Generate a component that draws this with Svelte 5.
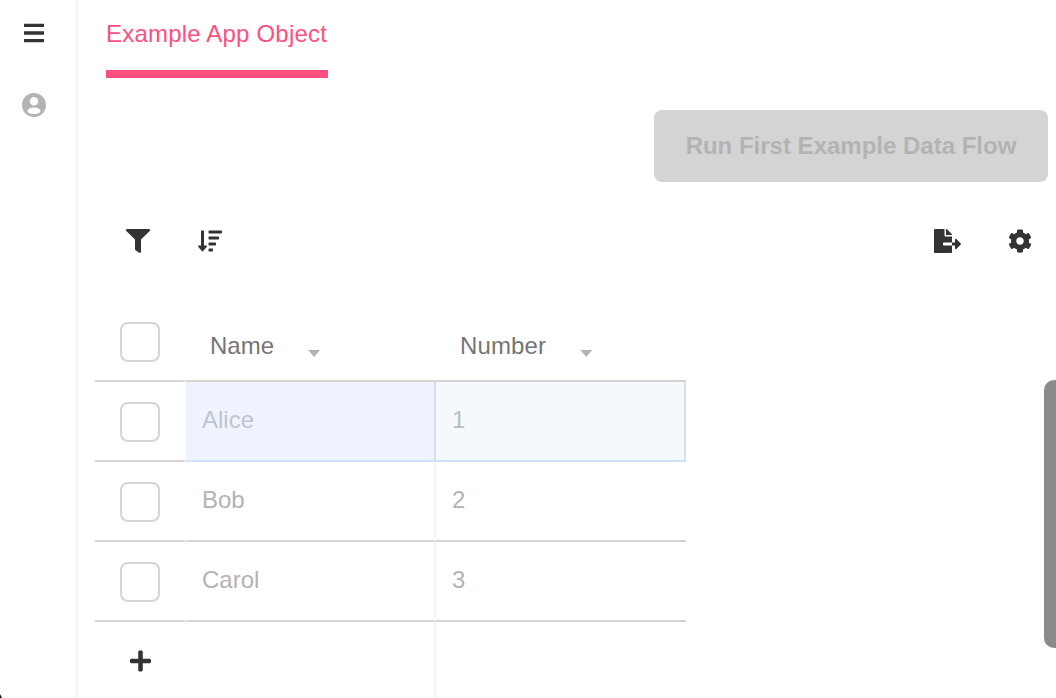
<script>
  const rows = [
    { name: 'Alice', number: 1, selected: true },
    { name: 'Bob', number: 2 },
    { name: 'Carol', number: 3 }
  ];
</script>

<div class="app">
  <nav class="sidebar">
    <svg class="menu" viewBox="0 0 20 20" width="20" height="20"><path d="M0 .7h20v3.400H0zM0 8.300h20v3.400H0zM0 15.900h20v3.400H0z" /></svg>
    <svg class="account" viewBox="2 2 20 20" width="24" height="24"><path d="M12 2C6.480 2 2 6.480 2 12s4.480 10 10 10 10-4.480 10-10S17.520 2 12 2zm0 3.400a3.500 3.500 0 0 1 0 7 3.500 3.500 0 0 1 0-7zm0 14.200c-3.200 0-5.400-1.100-5.400-2.600 0-1.900 2.600-2.900 5.400-2.900s5.400 1 5.400 2.900c0 1.500-2.200 2.600-5.400 2.600z" /></svg>
  </nav>

  <main>
    <div class="tabs"><span class="tab">Example App Object</span></div>

    <div class="actions"><button disabled>Run First Example Data Flow</button></div>

    <div class="toolbar">
      <svg viewBox="0 0 512 512" width="24" height="24"><path d="M487.976 0H24.028C2.71 0-8.047 25.866 7.058 40.971L192 225.941V432c0 7.831 3.821 15.17 10.237 19.662l80 55.98C298.02 518.69 320 507.493 320 487.98V225.941l184.947-184.97C520.021 25.896 509.338 0 487.976 0z" /></svg>
      <svg viewBox="0 0 512 512" width="24" height="24"><path d="M304 416h-64a16 16 0 0 0-16 16v32a16 16 0 0 0 16 16h64a16 16 0 0 0 16-16v-32a16 16 0 0 0-16-16zM176 352h-48V48a16 16 0 0 0-16-16H80a16 16 0 0 0-16 16v304H16c-14.19 0-21.36 17.24-11.29 27.31l80 96a16 16 0 0 0 22.62 0l80-96C197.35 369.26 190.22 352 176 352zM432 160H240a16 16 0 0 0-16 16v32a16 16 0 0 0 16 16h192a16 16 0 0 0 16-16v-32a16 16 0 0 0-16-16zM368 288H240a16 16 0 0 0-16 16v32a16 16 0 0 0 16 16h128a16 16 0 0 0 16-16v-32a16 16 0 0 0-16-16zM496 32H240a16 16 0 0 0-16 16v32a16 16 0 0 0 16 16h256a16 16 0 0 0 16-16V48a16 16 0 0 0-16-16z" /></svg>
      <span class="spacer"></span>
      <svg class="export" viewBox="0 0 576 512" width="27" height="24"><path d="M384 121.9c0-6.3-2.5-12.4-7-16.9L279.1 7c-4.5-4.5-10.6-7-17-7H256v128h128zM571 308l-95.7-96.4c-10.1-10.1-27.4-3-27.4 11.3V288h-64v64h64v65.2c0 14.3 17.3 21.4 27.4 11.3L571 332c6.6-6.6 6.6-17.4 0-24zm-379 28v-32c0-8.8 7.2-16 16-16h176V160H248c-13.2 0-24-10.8-24-24V0H24C10.7 0 0 10.7 0 24v464c0 13.3 10.7 24 24 24h336c13.3 0 24-10.7 24-24V352H208c-8.800 0-16-7.200-16-16z" /></svg>
      <svg viewBox="0 0 512 512" width="24" height="24"><path d="M487.400 315.700l-42.600-24.600c4.300-23.200 4.300-47 0-70.200l42.600-24.600c4.900-2.800 7.100-8.600 5.500-14-11.100-35.600-30-67.800-54.700-94.600-3.800-4.100-10-5.100-14.800-2.300L380.800 110c-17.900-15.400-38.500-27.300-60.800-35.100V25.800c0-5.600-3.900-10.500-9.400-11.700-36.700-8.200-74.300-7.800-109.200 0-5.500 1.200-9.400 6.100-9.400 11.700V75c-22.200 7.900-42.800 19.800-60.800 35.100L88.700 85.500c-4.900-2.800-11-1.900-14.800 2.300-24.700 26.700-43.600 58.900-54.700 94.600-1.700 5.400.6 11.200 5.500 14L67.300 221c-4.300 23.200-4.300 47 0 70.200l-42.600 24.600c-4.900 2.800-7.100 8.600-5.500 14 11.100 35.600 30 67.800 54.700 94.600 3.800 4.100 10 5.100 14.800 2.300l42.600-24.600c17.900 15.400 38.500 27.300 60.800 35.100v49.200c0 5.600 3.900 10.500 9.400 11.700 36.700 8.200 74.300 7.800 109.200 0 5.500-1.200 9.400-6.100 9.400-11.700v-49.200c22.200-7.900 42.800-19.800 60.800-35.100l42.600 24.600c4.900 2.800 11 1.900 14.800-2.300 24.700-26.700 43.600-58.900 54.700-94.600 1.500-5.500-.7-11.300-5.600-14.100zM256 336c-44.100 0-80-35.900-80-80s35.900-80 80-80 80 35.900 80 80-35.900 80-80 80z" /></svg>
    </div>

    <div class="table">
      <div class="row head">
        <div class="check"><span class="box"></span></div>
        <div class="cell"><span class="title">Name</span><span class="caret"></span></div>
        <div class="cell"><span class="title">Number</span><span class="caret"></span></div>
      </div>
      {#each rows as row}
        <div class="row" class:selected={row.selected}>
          <div class="check"><span class="box"></span></div>
          <div class="cell name">{row.name}</div>
          <div class="cell number">{row.number}</div>
        </div>
      {/each}
      <div class="row add">
        <div class="check">
          <svg viewBox="0 0 448 512" width="21" height="24"><path d="M416 208H272V64c0-17.670-14.330-32-32-32h-32c-17.670 0-32 14.330-32 32v144H32c-17.670 0-32 14.330-32 32v32c0 17.670 14.330 32 32 32h144v144c0 17.670 14.330 32 32 32h32c17.670 0 32-14.330 32-32V304h144c17.670 0 32-14.330 32-32v-32c0-17.670-14.330-32-32-32z" /></svg>
        </div>
        <div class="cell name"></div>
        <div class="cell number"></div>
      </div>
    </div>
  </main>

  <div class="scrollbar"></div>
  <div class="corner"></div>
</div>

<style>
  :global(body) { background: #fff; }
  .app {
    position: relative;
    display: flex;
    width: 1056px;
    height: 698px;
    overflow: hidden;
    font: 24px/28px "Liberation Sans", Arial, sans-serif;
    color: #757575;
  }
  .app * { box-sizing: border-box; }
  svg { display: block; flex: none; fill: #333; }
  .sidebar {
    flex: none;
    width: 78px;
    border-right: 2px solid #f3f3f3;
    display: flex;
    flex-direction: column;
    padding: 23px 0 0 22px;
    gap: 50px;
  }
  .menu { margin-left: 2px; }
  .account { fill: #b3b3b3; }
  main { flex: 1; min-width: 0; display: flex; flex-direction: column; }
  main > div { flex: none; }
  .tabs { display: flex; height: 78px; padding-left: 28px; }
  .tab {
    width: 222px;
    padding-top: 20px;
    border-bottom: 8px solid #ff4f81;
    color: #ff4f81;
    letter-spacing: 0.2px;
    white-space: nowrap;
  }
  .actions { display: flex; justify-content: flex-end; padding: 32px 8px 0 0; }
  button {
    width: 394px;
    height: 72px;
    padding: 0;
    border: 0;
    border-radius: 8px;
    background: #d4d4d4;
    color: #b3b3b3;
    font: bold 24px/28px "Liberation Sans", Arial, sans-serif;
    white-space: nowrap;
  }
  .toolbar { display: flex; align-items: center; gap: 48px; padding: 47px 24px 0 48px; }
  .spacer { flex: 1; }
  .export { margin-right: -1px; }
  .table { margin: 47px 0 0 17px; width: 591px; }
  .row { display: grid; grid-template-columns: 90px 251px 250px; height: 80px; }
  .head { height: 82px; }
  .check {
    display: flex;
    align-items: flex-start;
    padding: 20px 0 0 25px;
    border-bottom: 2px solid #d4d4d4;
  }
  .head .check { padding-top: 22px; }
  .box { width: 40px; height: 40px; border: 2px solid #d4d4d4; border-radius: 8px; background: #fff; }
  .cell { display: flex; color: #b3b3b3; border-bottom: 2px solid #d4d4d4; padding: 24px 0 0 16px; margin-left: 1px; }
  .number { margin-left: 0; }
  .name { border-right: 2px solid #f3f3f3; }
  .head .cell { padding: 32px 0 0 24px; margin-left: 1px; color: #757575; }
  .head .cell:last-child { margin-left: 0; }
  .head .cell:last-child .title { letter-spacing: 0.15px; }
  .caret {
    width: 12px;
    height: 7px;
    margin: 18px 0 0 34px;
    background: #b3b3b3;
    clip-path: polygon(0 0, 100% 0, 50% 100%);
  }
  .selected .cell { border-color: #cfe0f7; }
  .selected .name { background: #eff3fd; color: #c0c4ce; }
  .selected .number { background: #f5f9fe; color: #b9bdc2; border-right: 2px solid #cfe0f7; }
  .add .check, .add .cell { border-bottom: 0; }
  .add .check { padding: 27px 0 0 34.500px; }
  .scrollbar {
    position: absolute;
    right: 0;
    top: 380px;
    width: 12px;
    height: 268px;
    border-radius: 10px 0 0 10px;
    background: #8b8b8b;
  }
  .corner {
    position: absolute;
    left: 0;
    bottom: 0;
    width: 2px;
    height: 4px;
    background: #20101a;
    clip-path: polygon(0 0, 100% 100%, 0 100%);
  }
</style>
